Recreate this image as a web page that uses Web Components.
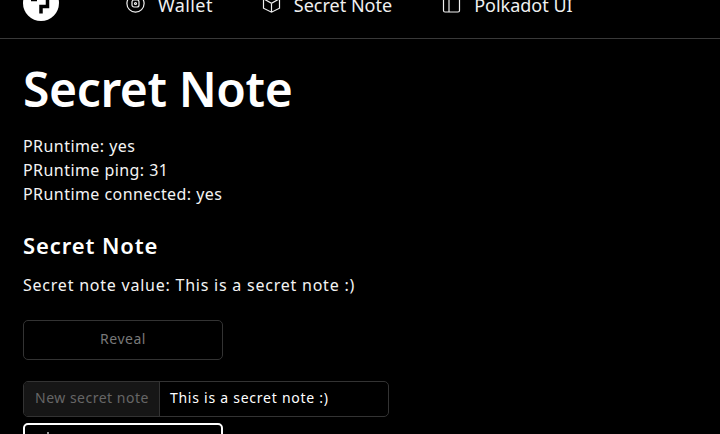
<!DOCTYPE html>
<html>
<head>
<meta charset="utf-8">
<style>
    html, body { margin: 0; height: 434px; overflow: hidden; background: #000; color: #fff; }
    body { font-family: "Noto Sans", sans-serif; }
</style>
</head>
<body>
<app-page>
    <top-nav></top-nav>
    <note-content></note-content>
</app-page>

<script>
const pageTemplate = document.createElement('template')
pageTemplate.innerHTML = `
    <style>
        :host { display: block; height: 434px; overflow: hidden; }
    </style>
    <slot></slot>
`

class AppPage extends HTMLElement {
    constructor() {
        super()
        this.attachShadow({ mode: 'open' })
        this.shadowRoot.appendChild(pageTemplate.content.cloneNode(true))
    }
}

const navTemplate = document.createElement('template')
navTemplate.innerHTML = `
    <style>
        :host { display: flex; align-items: center; height: 39px; box-sizing: border-box; border-bottom: 1px solid #393939; padding: 0 0 0 23px; overflow: hidden; }
        .logo { width: 36px; height: 36px; flex: none; margin-top: -33px; }
        nav { display: flex; margin: -28px 0 0 67px; font-size: 18px; color: #f0f0f0; }
        a { display: flex; align-items: center; gap: 13px; line-height: 24px; }
        a.wallet { letter-spacing: 0.4px; margin-right: -1px; }
        a + a { margin-left: 50px; }
        svg.icon { width: 19px; height: 19px; fill: none; stroke: #f0f0f0; stroke-width: 1.2; flex: none; margin-top: -3px; }
    </style>
    <svg class="logo" viewBox="0 0 36 36">
        <circle cx="18" cy="18" r="18" fill="#fff"/>
        <path d="M8 14.500H14M24.500 12V21.500H18V28.500" fill="none" stroke="#000" stroke-width="3.500"/>
    </svg>
    <nav>
        <a class="wallet"><svg class="icon" viewBox="0 0 19 19"><circle cx="9.500" cy="9.500" r="8.600"/><rect x="6" y="6" width="7" height="7" rx="2"/><circle cx="9.500" cy="9.500" r="1"/></svg>Wallet</a>
        <a><svg class="icon" viewBox="0 0 19 19"><path d="M9.500 1l8 3.800v9.400l-8 4-8-4V4.800zM1.500 4.800l8 4.400 8-4.400M9.500 9.200v9"/></svg>Secret Note</a>
        <a><svg class="icon" viewBox="0 0 19 19"><rect x="1.500" y="1" width="16" height="17" rx="1.500"/><path d="M7 1v17"/></svg>Polkadot UI</a>
    </nav>
`

class TopNav extends HTMLElement {
    constructor() {
        super()
        this.attachShadow({ mode: 'open' })
        this.shadowRoot.appendChild(navTemplate.content.cloneNode(true))
    }
}

const contentTemplate = document.createElement('template')
contentTemplate.innerHTML = `
    <style>
        :host { display: block; padding: 19px 23px 0; font-size: 16px; letter-spacing: 0.44px; color: #f4f4f4; }
        h1 { margin: 0; font-size: 48px; line-height: 62px; font-weight: 600; color: #fff; letter-spacing: -0.4px; }
        .status { margin-top: 14px; line-height: 24px; }
        h2 { margin: 23px 0 0; font-size: 22px; line-height: 32px; font-weight: 600; color: #fff; letter-spacing: 0.9px; }
        p { margin: 12px 0 0; line-height: 24px; letter-spacing: 0.77px; }
        .reveal { margin-top: 23px; }
        .note { margin-top: 21px; }
        .submit { margin-top: 6px; }
    </style>
    <h1>Secret Note</h1>
    <div class="status">
        <div>PRuntime: yes</div>
        <div>PRuntime ping: 31</div>
        <div>PRuntime connected: yes</div>
    </div>
    <h2>Secret Note</h2>
    <p>Secret note value: This is a secret note :)</p>
    <ui-button class="reveal" disabled>Reveal</ui-button>
    <ui-input class="note" label="New secret note" value="This is a secret note :)"></ui-input>
    <ui-button class="submit" start>
        <svg viewBox="0 0 22 22" width="22" height="22" fill="none" stroke="#fff" stroke-width="1.2"><path d="M11 0v22"/></svg>
    </ui-button>
`

class NoteContent extends HTMLElement {
    constructor() {
        super()
        this.attachShadow({ mode: 'open' })
        this.shadowRoot.appendChild(contentTemplate.content.cloneNode(true))
    }
}

const buttonTemplate = document.createElement('template')
buttonTemplate.innerHTML = `
    <style>
        :host { display: flex; align-items: center; justify-content: center; width: 200px; height: 40px; box-sizing: border-box; border: 1px solid #fff; border-radius: 5px; font-size: 14px; color: #fff; padding-bottom: 4px; letter-spacing: 0.5px; }
        :host([disabled]) { border-color: #333; color: #787878; }
        :host([start]) { justify-content: flex-start; padding: 0 0 0 12px; border-width: 2px; }
    </style>
    <slot></slot>
`

class UiButton extends HTMLElement {
    constructor() {
        super()
        this.attachShadow({ mode: 'open' })
        this.shadowRoot.appendChild(buttonTemplate.content.cloneNode(true))
    }
}

const inputTemplate = document.createElement('template')
inputTemplate.innerHTML = `
    <style>
        :host { display: flex; width: 366px; height: 36px; box-sizing: border-box; border: 1px solid #333; border-radius: 5px; overflow: hidden; font-size: 14px; }
        .label { display: flex; align-items: center; padding: 0 10px 4px 11px; background: #161616; border-right: 1px solid #333; color: #666; letter-spacing: 0.5px; }
        .value { display: flex; align-items: center; padding: 0 10px 4px; color: #fff; letter-spacing: 0.75px; }
    </style>
    <span class="label"></span>
    <span class="value"></span>
`

class UiInput extends HTMLElement {
    constructor() {
        super()
        this.attachShadow({ mode: 'open' })
        this.shadowRoot.appendChild(inputTemplate.content.cloneNode(true))
        this.shadowRoot.querySelector('.label').innerText = this.getAttribute('label')
        this.shadowRoot.querySelector('.value').innerText = this.getAttribute('value')
    }
}

window.customElements.define('app-page', AppPage)
window.customElements.define('top-nav', TopNav)
window.customElements.define('note-content', NoteContent)
window.customElements.define('ui-button', UiButton)
window.customElements.define('ui-input', UiInput)
</script>
</body>
</html>
